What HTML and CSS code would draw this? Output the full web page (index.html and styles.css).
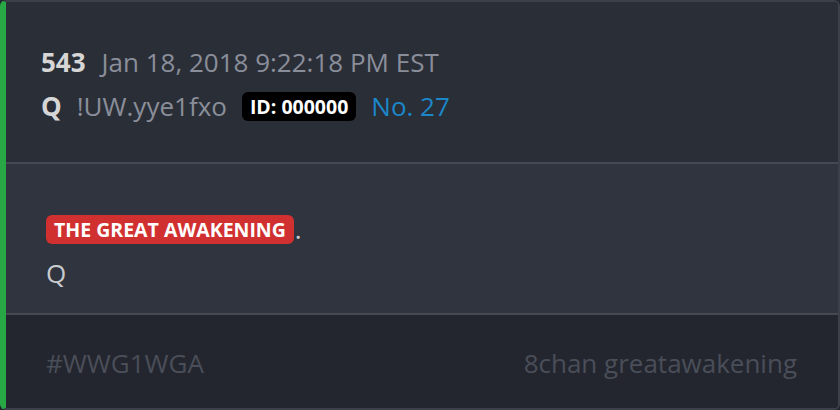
FILE: index.html
```html
<!DOCTYPE html>
<html>
<head lang="en">
    <meta charset="UTF-8">
    <title>Post 543</title>
    <link rel="stylesheet" href="styles.css">
</head>
<body>
<!-- 帖子卡片 -->
<div class="post-card">
    <div class="post-head"><!-- 头部 -->
        <div class="head-row">
            <span class="post-num">543</span>
            <span class="post-time">Jan 18, 2018 9:22:18 PM EST</span>
        </div>
        <div class="head-row row-author">
            <span class="post-name">Q</span>
            <span class="post-trip">!UW.yye1fxo</span>
            <span class="post-id">ID: 000000</span>
            <span class="post-no">No. 27</span>
        </div>
    </div>
    <div class="post-body"><!-- 内容 -->
        <div class="body-line"><span class="tag-red">THE GREAT AWAKENING</span>.</div>
        <div class="body-line">Q</div>
    </div>
    <div class="post-foot"><!-- 底部 -->
        <span>#WWG1WGA</span>
        <span>8chan greatawakening</span>
    </div>
</div>
</body>
</html>
```

FILE: styles.css
```css
html, body{
    margin: 0;
    padding: 0;
    background: #23262e;
}
body{
    font-family: "Open Sans", "Liberation Sans", sans-serif;
    font-size: 26px;
    line-height: 44px;
}
.post-card{
    box-sizing: border-box;
    height: 410px;
    border: 2px solid #3b404b;
    border-left: 6px solid #28a745;
    border-radius: 6px;
    overflow: hidden;
    display: flex;
    flex-direction: column;
}
.post-head{
    background: #2a2e37;
    padding: 38px 35px 34px;
    border-bottom: 2px solid #444954;
}
.head-row{
    display: flex;
    align-items: center;
    gap: 16px;
    height: 44px;
}
.row-author{
    gap: 15px;
}
.post-num,
.post-name{
    font-weight: bold;
    color: #d6d6d6;
}
.post-time,
.post-trip{
    color: #8a8e9a;
}
.post-id{
    background: #000;
    color: #fff;
    font-weight: bold;
    font-size: 19.5px;
    line-height: 29px;
    padding: 0 8px;
    border-radius: 6px;
}
.post-no{
    color: #1b87c9;
}
.post-body{
    background: #2f343e;
    padding: 43px 40px 18px;
    border-bottom: 2px solid #444954;
    color: #c9cbcf;
}
.body-line{
    display: flex;
    align-items: center;
    height: 44px;
}
.tag-red{
    background: #d03130;
    color: #fff;
    font-weight: bold;
    font-size: 19.5px;
    line-height: 29px;
    padding: 0 8px;
    border-radius: 6px;
    margin-right: 1px;
}
.post-foot{
    flex: 1;
    background: #23262e;
    padding: 26px 41px 0 40px;
    display: flex;
    justify-content: space-between;
    color: #4a4e59;
}
```
